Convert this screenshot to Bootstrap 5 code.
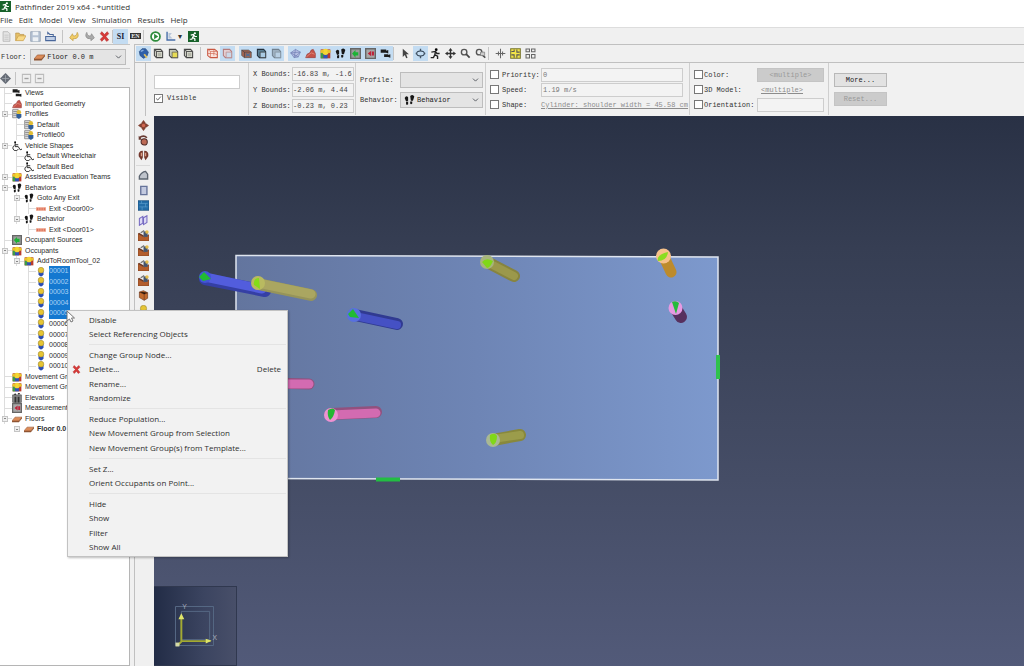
<!DOCTYPE html>
<html lang="en">
<head>
<meta charset="utf-8">
<meta name="viewport" content="width=device-width, initial-scale=1">
<title>Pathfinder 2019 x64 - *untitled</title>
<link href="https://cdn.jsdelivr.net/npm/bootstrap@5.3.0/dist/css/bootstrap.min.css" rel="stylesheet">
<style>
  body { font: 8px/12px "Open Sans", "Noto Sans", sans-serif; color: #333; background: #f0f0f0; }
  .mono { font-family: "Liberation Mono", monospace; font-size: 7px; line-height: 10px; color: #333; }
  .titlebar { height: 13px; background: #fff; }
  .menubar { height: 14px; background: #fff; gap: 6px; }
  .menubar a { color: #333; }
  .toolstrip { height: 17px; border-top: 1px solid #ddd; }
  .tool { width: 15px; height: 15px; flex: none; padding: 0; border: 0; border-radius: 0; line-height: 1; display: flex; align-items: center; justify-content: center; background: transparent; }
  .tool.first { width: 13px; }
  .tool.on { background: #c3dcf2; }
  .tool svg, .ico { width: 11px; height: 11px; flex: none; }
  .tool b { font: bold 8px "Liberation Serif", serif; color: #223; }
  .tool b.lang { font-size: 6px; background: #333; color: #eee; padding: 0 1px; }
  .rule-v { width: 1px; height: 13px; background: #c4c4c4; flex: none; }
  .side { width: 130px; flex: none; border-top: 1px solid #c4c4c4; }
  .floorbar { height: 24px; border-bottom: 1px solid #c8c8c8; padding: 0 4px 0 1px; }
  .treebar { height: 18px; padding-left: 0; }
  .treebar .ico { color: #555; }
  .tree { background: #fff; border: 1px solid #b5b5b5; border-left: 0; font: 7px/10px "Liberation Sans", sans-serif; color: #2c2c2c; white-space: nowrap; overflow: hidden; }
  .tree li { display: flex; align-items: center; height: 10px; }
  .tree li:nth-child(even) { height: 11px; }
  .tree .ico { width: 10px; height: 10px; margin-right: 3px; }
  .tree .on { background: #1478d0; color: #a9d2f5; align-self: stretch; padding-right: 2px; }
  .knot { width: 12px; align-self: stretch; flex: none; display: flex; align-items: center; padding-left: 2px;
    background: linear-gradient(#ddd, #ddd) 4px 0 / 1px 100% no-repeat, linear-gradient(#ddd, #ddd) 4px 5px / 8px 1px no-repeat; }
  .knot.pass { background: linear-gradient(#ddd, #ddd) 4px 0 / 1px 100% no-repeat; }
  .knot.none { background: none; }
  .knot i { width: 6px; height: 6px; border: 1px solid #c5c5c5; background: linear-gradient(#888, #888) center / 2px 1px no-repeat #eee; }
  .work { border: 1px solid #c0c0c0; border-width: 1px 0 0 1px; margin-left: 4px; min-width: 0; }
  .viewtools { height: 18px; padding-left: 1px; border-bottom: 1px solid #c0c0c0; gap: 0; }
  .props { margin-left: 10px; height: 53px; border-left: 1px solid #c0c0c0; background: #f1f1f1; white-space: nowrap; overflow: hidden; }
  .cell { border-right: 1px solid #cfcfcf; height: 52px; flex: none; }
  .field { height: 14px; min-height: 0; padding: 0 1px; border: 1px solid #cdcdcd; border-radius: 0; font: inherit; color: #777; background: #f3f3f3; }
  .bounds .field { color: #444; }
  .pick { height: 16px; min-height: 0; padding: 0 10px 0 14px; border: 1px solid #bdbdbd; border-radius: 0; font: inherit; color: #222; background-color: #e4e4e4; background-size: 7px 6px; background-position: right 3px center; }
  .tick { width: 9px; height: 9px; margin: 0; flex: none; border: 1px solid #777; border-radius: 0 !important; background-color: #fff; }
  .tick:checked { background-color: #fff; border-color: #777; background-image: url("data:image/svg+xml,%3csvg xmlns='http://www.w3.org/2000/svg' viewBox='0 0 9 9'%3e%3cpath d='M1.5 4.5l2 2 4-4.5' fill='none' stroke='%23333'/%3e%3c/svg%3e"); }
  .titled { width: 103px; }
  .bounds { display: grid; grid-template-columns: 39px 62px; grid-auto-rows: 14px; row-gap: 2px; padding: 4px 2px 0 4px; width: 107px; align-items: center; }
  .picks { display: grid; grid-template-columns: 40px 83px; row-gap: 4px; padding: 9px 3px 0 4px; width: 130px; align-content: start; align-items: center; }
  .attrs { display: grid; grid-template-columns: 12px 39px 142px; grid-auto-rows: 15px; padding: 4px 3px 0 4px; width: 204px; align-items: center; }
  .looks { display: grid; grid-template-columns: 10px 53px 67px; grid-auto-rows: 15px; padding: 4px 3px 0 4px; width: 139px; align-items: center; }
  .push { height: 14px; padding: 0; border: 1px solid #b8b8b8; border-radius: 0; font: inherit; background: #e2e2e2; color: #222; }
  .push:disabled { background: #cbcbcb; border-color: #c4c4c4; color: #999; opacity: 1; }
  .acts { width: 62px; padding: 10px 4px 0 5px; gap: 5px; }
  .faint { color: #8c8c8c; }
  .rail { width: 19px; padding: 2px 0 0 1px; flex: none; }
  .rail hr { width: 14px; margin: 2px 0; border-color: #999; }
  .stage { background: linear-gradient(#293145, #363e53 24%, #454d66 66%, #525a79); min-width: 0; }
  .stage .scene { display: block; width: 100%; }
  .axes { position: absolute; left: 0; bottom: 0; width: 83px; height: 80px; background: linear-gradient(90deg, #222c46, #3b4460 60%, #484f69); border: 1px solid #30384f; border-left: 0; }
  .popmenu { position: absolute; left: 67px; top: 310px; width: 221px; background: #f2f2f2; border: 1px solid #c2c2c2; border-radius: 0; padding: 1px 0 2px; box-shadow: 1px 1px 2px #0004; font-size: 8px; }
  .popmenu button { display: flex; align-items: center; width: 100%; height: 15px; padding: 0 6px 0 4px; border: 0; background: none; color: #303030; text-align: left; line-height: 12px; }
  .popmenu div button:nth-child(even) { height: 14px; }
  .popmenu svg { width: 9px; height: 9px; }
  .popmenu .lead-in { width: 17px; flex: none; display: flex; }
  .popmenu hr { margin: 3px 1px 2px 21px; border-color: #bbb; }
  .pointer { position: absolute; left: 66px; top: 310px; width: 9px; height: 13px; }
</style>
</head>
<body class="vh-100 d-flex flex-column overflow-hidden position-relative">
<svg class="d-none">
  <defs>
  <symbol id="run" viewBox="0 0 16 16"><path d="M0 0h16v16H0z" fill="#17622a"/><circle cx="10" cy="3.3" r="1.6" fill="#fff"/><path d="M4 6l4-1 2 3h3M8.500 5.500l-1.500 4 3 2v3M7 9l-1.500 3H2.500" fill="none" stroke="#fff" stroke-width="1.8"/></symbol>
  <symbol id="page" viewBox="0 0 16 16"><path d="M3 1h7l3 3v11H3z" fill="#e4e4e4" stroke="#aaa"/><path d="M5 6h6M5 9h6M5 12h6" stroke="#bbb"/></symbol>
  <symbol id="open" viewBox="0 0 16 16"><path d="M1 14V3h5l1 2h6v3" fill="#e5c069" stroke="#b8924a"/><path d="M1 14l4-7h11l-4 7z" fill="#f8d987" stroke="#c79c48"/></symbol>
  <symbol id="disk" viewBox="0 0 16 16"><path d="M1 1h14v14H1z" fill="#b6c3d4" stroke="#8796aa"/><path d="M4 1h8v5H4zM4 9h8v6H4z" fill="#edf1f5"/></symbol>
  <symbol id="import" viewBox="0 0 16 16"><path d="M1 8h14v6H1z" fill="#c1cfe5" stroke="#49679b" stroke-width="1.500"/><path d="M4 5V2l3 3h5v3" fill="none" stroke="#49679b" stroke-width="1.500"/></symbol>
  <symbol id="undo" viewBox="0 0 16 16"><path d="M1 10l4-6 1 3c4 1 5-1 6-5 3 5 1 10-6 9v3z" fill="#f2cd68" stroke="#bf9a3e"/></symbol>
  <symbol id="redo" viewBox="0 0 16 16"><path d="M15 10l-4-6-1 3C6 8 5 6 4 2c-3 5-1 10 6 9v3z" fill="#aaa" stroke="#888"/></symbol>
  <symbol id="cross" viewBox="0 0 16 16"><path d="M2 4l2-3 4 4 4-4 2 3-4 4 4 5-3 2-3-4-4 4-2-3 4-4z" fill="#d73a38" stroke="#b93434"/></symbol>
  <symbol id="play" viewBox="0 0 16 16"><circle cx="8" cy="8" r="6.500" fill="#fff" stroke="#2c8b3b" stroke-width="2.500"/><path d="M6 4l6 4-6 4z" fill="#2c8b3b"/></symbol>
  <symbol id="chart" viewBox="0 0 16 16"><path d="M3 1v12h12" fill="none" stroke="#456ca8" stroke-width="2"/><path d="M5 11V3h5l-3 4 4 4z" fill="#b9c6da"/></symbol>
  <symbol id="gem" viewBox="0 0 16 16"><path d="M2 5l4-4h5l4 5-2 6-5 3-5-4z" fill="#2e60a9" stroke="#24477b"/><path d="M9 9l4 5" stroke="#e2c35e" stroke-width="2.500"/><path d="M4 5l4-2" stroke="#86aede" stroke-width="2"/></symbol>
  <symbol id="cube" viewBox="0 0 16 16"><path d="M2 2h9l3 3v9H5l-3-3z" fill="#d8dacf" stroke="#444" stroke-width="1.500"/><path d="M5 5h9M5 5v9M2 2l3 3" stroke="#555" stroke-width="1.500" fill="none"/><path d="M7 7h5v5H7z" fill="#b4b6a9"/></symbol>
  <symbol id="cubey" viewBox="0 0 16 16"><path d="M2 2h9l3 3v9H5l-3-3z" fill="#c6c9b5" stroke="#444" stroke-width="1.500"/><path d="M6 6h8v8H6z" fill="#e7dc55" stroke="#555"/></symbol>
  <symbol id="cuber" viewBox="0 0 16 16"><path d="M1 2h10l4 3v9H5l-4-3z" fill="#fae3dc" stroke="#c85640" stroke-width="1.500"/><path d="M1 2l4 3h10M5 5v9M1 8h10l4 2M10 2v9" stroke="#d16a55" fill="none"/></symbol>
  <symbol id="cubep" viewBox="0 0 16 16"><path d="M2 2h9l3 3v9H5l-3-3z" fill="#e4cfd2" stroke="#b57b7c" stroke-width="1.500"/><path d="M6 6h8v8H6z" fill="#ccd8e8" stroke="#b88"/></symbol>
  <symbol id="cubeb" viewBox="0 0 16 16"><path d="M2 2h9l3 3v9H5l-3-3z" fill="#5b8096" stroke="#23303d" stroke-width="1.500"/><path d="M6 6h8v8H6z" fill="#a9cbe4" stroke="#333"/></symbol>
  <symbol id="cubes" viewBox="0 0 16 16"><path d="M2 2h9l3 3v9H5l-3-3z" fill="#9db0c0" stroke="#71808e" stroke-width="1.500"/><path d="M6 6h8v8H6z" fill="#b9d0e4" stroke="#81909e"/></symbol>
  <symbol id="cubex" viewBox="0 0 16 16"><path d="M1 3h10l4 3v8H5l-4-3z" fill="#a56450" stroke="#555"/><path d="M1 3l4 3h10M5 6v8" stroke="#3f3f48" fill="none"/><path d="M7 8l6 4M7 12l6-4" stroke="#4a6d96" stroke-width="1.500"/></symbol>
  <symbol id="mesh" viewBox="0 0 16 16"><path d="M1 7l7-5 7 4-3 7-6 1z" fill="#b6c0e3" stroke="#7180b5"/><path d="M1 7l11 6M8 2l-2 12M15 6L6 14M1 7l14-1" stroke="#7180b5"/></symbol>
  <symbol id="hill" viewBox="0 0 16 16"><path d="M1 14l2-5 4-2 2-4 3-1 3 6v6z" fill="#c65349" stroke="#983f3b"/><path d="M2 13l7-6 5 2" stroke="#e59b8b" fill="none"/></symbol>
  <symbol id="group" viewBox="0 0 16 16"><path d="M1 2h14v13H1z" fill="#b83c2c"/><path d="M1 7h4v8H1z" fill="#3a9c48"/><path d="M5 9h6v6H5z" fill="#2c55b8"/><circle cx="8" cy="5.500" r="4.500" fill="#f4d634"/><circle cx="3" cy="5" r="2.500" fill="#e9c32c"/><circle cx="13" cy="5" r="2.500" fill="#e9c32c"/></symbol>
  <symbol id="feet" viewBox="0 0 16 16"><path d="M1 5q2-4 5-1l0 5-3 1zM3 11l3-1v4q-2 2-3 0zM9 2q4-3 6 1l-2 6h-3zM9 10h3v3q-2 2-3 0z" fill="#151515"/></symbol>
  <symbol id="src" viewBox="0 0 16 16"><path d="M1 1h14v14H1z" fill="#9a9d9a" stroke="#666" stroke-width="2"/><path d="M3 8l5-5v3h4v5H8v3z" fill="#1cb335"/></symbol>
  <symbol id="meas" viewBox="0 0 16 16"><path d="M1 1h14v14H1z" fill="#a8a8a8" stroke="#666" stroke-width="2"/><path d="M4 8l5-4v8zM10 5h3v6h-3z" fill="#bd2139"/></symbol>
  <symbol id="cams" viewBox="0 0 16 16"><path d="M1 2h8v2l3-1v5L9 7H1zM6 9h6v1l3-1v5l-3-1H6z" fill="#1c1c1c"/></symbol>
  <symbol id="arrow" viewBox="0 0 16 16"><path d="M4 1v12l3-3 2 5 2-1-2-5h4z" fill="#444"/></symbol>
  <symbol id="orbit" viewBox="0 0 16 16"><path d="M8 1v14M1 8h14" stroke="#456" stroke-width="2"/><ellipse cx="8" cy="8" rx="5.500" ry="3.500" fill="#c3dcf2" stroke="#345" stroke-width="1.500"/></symbol>
  <symbol id="walk" viewBox="0 0 16 16"><circle cx="9" cy="2.500" r="2"/><path d="M2 6l6-1 2 3h4M8 5l-1 5 4 2v4M7 10l-2 4H1" fill="none" stroke="#222" stroke-width="2"/></symbol>
  <symbol id="move" viewBox="0 0 16 16"><path d="M8 0l3 4H9v3h3V5l4 3-4 3V9H9v3h2l-3 4-3-4h2V9H4v2L0 8l4-3v2h3V4H5z" fill="#333"/></symbol>
  <symbol id="globe" viewBox="0 0 16 16"><path d="M8 0l3 3 2 2 3 3-3 3-2 2-3 3-3-3-2-2-3-3 3-3 2-2z" fill="#666c76"/><path d="M8 3v10M3 8h10" stroke="#a8adb5"/></symbol>
  <symbol id="lens" viewBox="0 0 16 16"><circle cx="6" cy="6" r="4" fill="#eee" stroke="#555" stroke-width="2"/><path d="M9 9l5 5" stroke="#444" stroke-width="2.500"/></symbol>
  <symbol id="lens2" viewBox="0 0 16 16"><circle cx="6" cy="6" r="4" fill="#eee" stroke="#555" stroke-width="2"/><path d="M9 9l6 5" stroke="#444" stroke-width="2"/><path d="M8 6h6v5H8z" stroke="#777" fill="#ccc"/></symbol>
  <symbol id="axis" viewBox="0 0 16 16"><path d="M8 1v14M1 8h14M5 5v6M11 5v6" stroke="#666" stroke-width="1.500"/></symbol>
  <symbol id="fity" viewBox="0 0 16 16"><path d="M1 1h14v14H1z" fill="#f2e448" stroke="#77752f" stroke-width="1.500"/><path d="M2 5h4V2M10 2v4h4M14 10h-4v4M6 14v-4H2" fill="none" stroke="#555" stroke-width="1.500"/></symbol>
  <symbol id="fit" viewBox="0 0 16 16"><path d="M1.500 1.500h5v4h-5zM9.500 1.500h5v4h-5zM1.500 9.500h5v5h-5zM9.500 9.500h5v5h-5z" fill="none" stroke="#666" stroke-width="1.500"/></symbol>
  <symbol id="slab" viewBox="0 0 16 16"><path d="M0 11l5-6h11l-5 6z" fill="#dc8c58" stroke="#9a5c38"/><path d="M0 11h11l5-6v2l-5 6H0z" fill="#8e5432"/></symbol>
  <symbol id="prof" viewBox="0 0 16 16"><path d="M1 1h9v13H1z" fill="#ddd" stroke="#666"/><path d="M2 4h6M2 7h6M2 10h6" stroke="#666"/><circle cx="11" cy="5" r="3.500" fill="#dfbd35"/><path d="M7 8h8v5l-4 3-4-3z" fill="#315e98"/></symbol>
  <symbol id="chair" viewBox="0 0 16 16"><circle cx="5" cy="2" r="1.500"/><path d="M5 3v6h5l3 5 3-1M5 6h5" fill="none" stroke="#222" stroke-width="1.500"/><path d="M4 7a4.500 4.500 0 1 0 6 6" fill="none" stroke="#222" stroke-width="1.500"/></symbol>
  <symbol id="door" viewBox="0 0 16 16"><path d="M0 5h16v6H0z" fill="#f4b9a5"/><path d="M2 6v4M5 6v4M8 6v4M11 6v4M14 6v4" stroke="#d4573e" stroke-width="1.500"/></symbol>
  <symbol id="man" viewBox="0 0 16 16"><path d="M4 6h8v6q-4 6-8 0z" fill="#2a4db3"/><circle cx="8" cy="5" r="4.500" fill="#e6c534" stroke="#a5903a"/></symbol>
  <symbol id="lift" viewBox="0 0 16 16"><path d="M1 3h14v12H1z" fill="#8a8a8a" stroke="#444"/><path d="M5 0l2 3H3zM11 3l2-3H9zM4 6h3v9H4zM9 6h3v9H9z" fill="#333"/></symbol>
  <symbol id="mover" viewBox="0 0 16 16"><path d="M8 0l3 4v1h1l4 3-4 3h-1v1l-3 4-3-4v-1H4L0 8l4-3h1V4z" fill="#854334"/><circle cx="8" cy="8" r="2.500" fill="#d16650"/></symbol>
  <symbol id="spin" viewBox="0 0 16 16"><path d="M2 4q6-5 11 0" fill="none" stroke="#683a32" stroke-width="2.500"/><path d="M1 1v6h5z" fill="#683a32"/><circle cx="9" cy="10" r="4.500" fill="#bc6a55" stroke="#4c2a27" stroke-width="1.500"/></symbol>
  <symbol id="flip" viewBox="0 0 16 16"><path d="M7 1q-7 0-6 8l4 6 2-4zM9 1q7 0 6 8l-4 6-2-4z" fill="#74382d"/><path d="M5 4v5M11 4v5" stroke="#dc9d85" stroke-width="2"/></symbol>
  <symbol id="poly" viewBox="0 0 16 16"><path d="M2 13V9q3-6 9-7l3 4v7z" fill="#bfc4cc" stroke="#5c6570" stroke-width="2"/></symbol>
  <symbol id="rect" viewBox="0 0 16 16"><path d="M4 2h9v12H4z" fill="#c3cae0" stroke="#66739a" stroke-width="2"/></symbol>
  <symbol id="wall" viewBox="0 0 16 16"><path d="M0 1h16v14H0z" fill="#236da8" stroke="#1b4c79"/><path d="M2 5h12M2 10h12M5 1v4M11 5v5M6 10v5" stroke="#5b9ccc"/></symbol>
  <symbol id="gate" viewBox="0 0 16 16"><path d="M2 5l5-3v10l-5 3zM8 4l5-3v10l-5 3z" fill="#dcdaf5" stroke="#766bc2" stroke-width="1.500"/></symbol>
  <symbol id="stair" viewBox="0 0 16 16"><path d="M0 5l5 3 4 2 7-3v9H0z" fill="#b35d2c" stroke="#7a4024"/><path d="M8 2h6v8H8z" fill="#43556f"/><path d="M1 5l7 4" stroke="#6d3821" stroke-width="2"/><path d="M4 4l5-3" stroke="#777" stroke-width="2"/><circle cx="13" cy="3" r="2.500" fill="#e5bd4a"/></symbol>
  <symbol id="box" viewBox="0 0 16 16"><path d="M2 3l6-2 6 3v8l-5 3-7-4z" fill="#c26b2d" stroke="#713b20"/><path d="M2 3l7 3 5-2M9 6v9" stroke="#713b20"/></symbol>
  <symbol id="mini" viewBox="0 0 16 16"><path d="M2 2h12v12H2z" fill="#eee" stroke="#aaa" stroke-width="1.500"/><path d="M5 8h6" stroke="#888" stroke-width="2"/></symbol>
  </defs>
</svg>

<header>
  <div class="titlebar d-flex align-items-center"><svg class="ico me-0"><use href="#run"/></svg><span class="ps-1">Pathfinder 2019 x64 - *untitled</span></div>
  <nav class="menubar d-flex align-items-center">
    <a class="text-decoration-none" href="#">File</a><a class="text-decoration-none" href="#">Edit</a><a class="text-decoration-none" href="#">Model</a><a class="text-decoration-none" href="#">View</a><a class="text-decoration-none" href="#">Simulation</a><a class="text-decoration-none" href="#">Results</a><a class="text-decoration-none" href="#">Help</a>
  </nav>
  <div class="toolstrip d-flex align-items-center">
    <button class="tool first" aria-label="New"><svg><use href="#page"/></svg></button>
    <button class="tool" aria-label="Open"><svg><use href="#open"/></svg></button>
    <button class="tool" aria-label="Save"><svg><use href="#disk"/></svg></button>
    <button class="tool" aria-label="Import"><svg><use href="#import"/></svg></button>
    <span class="rule-v mx-1"></span>
    <button class="tool" aria-label="Undo"><svg><use href="#undo"/></svg></button>
    <button class="tool" aria-label="Redo"><svg><use href="#redo"/></svg></button>
    <button class="tool" aria-label="Delete"><svg><use href="#cross"/></svg></button>
    <span class="rule-v"></span>
    <button class="tool on"><b>SI</b></button>
    <button class="tool"><b class="lang">EN</b></button>
    <span class="rule-v me-1"></span>
    <button class="tool" aria-label="Run"><svg><use href="#play"/></svg></button>
    <button class="tool" aria-label="Results"><svg><use href="#chart"/></svg></button>
    <span class="me-1">▾</span>
    <button class="tool" aria-label="Show results"><svg><use href="#run"/></svg></button>
  </div>
</header>

<main class="d-flex flex-grow-1 overflow-hidden">
  <aside class="side d-flex flex-column">
    <div class="floorbar mono d-flex align-items-center">
      <label for="floor" class="me-1">Floor:</label>
      <div class="position-relative flex-grow-1">
        <svg class="ico position-absolute top-50 translate-middle-y ms-1"><use href="#slab"/></svg>
        <select id="floor" class="form-select pick ps-3"><option>Floor 0.0 m</option></select>
      </div>
    </div>
    <div class="treebar d-flex align-items-center">
      <svg class="ico"><use href="#globe"/></svg><span class="rule-v mx-1"></span>
      <button class="tool first" aria-label="Expand all"><svg class="opacity-75"><use href="#mini"/></svg></button>
      <button class="tool first" aria-label="Collapse all"><svg class="opacity-75"><use href="#mini"/></svg></button>
    </div>
    <ul class="tree list-unstyled mb-0 flex-grow-1">
      <li><span class="knot"></span><svg class="ico"><use href="#cams"/></svg>Views</li>
      <li><span class="knot"></span><svg class="ico"><use href="#hill"/></svg>Imported Geometry</li>
      <li><span class="knot"><i></i></span><svg class="ico"><use href="#prof"/></svg>Profiles</li>
      <li><span class="knot pass"></span><span class="knot"></span><svg class="ico"><use href="#prof"/></svg>Default</li>
      <li><span class="knot pass"></span><span class="knot"></span><svg class="ico"><use href="#prof"/></svg>Profile00</li>
      <li><span class="knot"><i></i></span><svg class="ico"><use href="#chair"/></svg>Vehicle Shapes</li>
      <li><span class="knot pass"></span><span class="knot"></span><svg class="ico"><use href="#chair"/></svg>Default Wheelchair</li>
      <li><span class="knot pass"></span><span class="knot"></span><svg class="ico"><use href="#chair"/></svg>Default Bed</li>
      <li><span class="knot"><i></i></span><svg class="ico"><use href="#group"/></svg>Assisted Evacuation Teams</li>
      <li><span class="knot"><i></i></span><svg class="ico"><use href="#feet"/></svg>Behaviors</li>
      <li><span class="knot pass"></span><span class="knot"><i></i></span><svg class="ico"><use href="#feet"/></svg>Goto Any Exit</li>
      <li><span class="knot pass"></span><span class="knot pass"></span><span class="knot"></span><svg class="ico"><use href="#door"/></svg>Exit &lt;Door00&gt;</li>
      <li><span class="knot pass"></span><span class="knot"><i></i></span><svg class="ico"><use href="#feet"/></svg>Behavior</li>
      <li><span class="knot pass"></span><span class="knot none"></span><span class="knot"></span><svg class="ico"><use href="#door"/></svg>Exit &lt;Door01&gt;</li>
      <li><span class="knot"></span><svg class="ico"><use href="#src"/></svg>Occupant Sources</li>
      <li><span class="knot"><i></i></span><svg class="ico"><use href="#group"/></svg>Occupants</li>
      <li><span class="knot pass"></span><span class="knot"><i></i></span><svg class="ico"><use href="#group"/></svg>AddToRoomTool_02</li>
      <li><span class="knot pass"></span><span class="knot none"></span><span class="knot"></span><svg class="ico"><use href="#man"/></svg><span class="on">00001</span></li>
      <li><span class="knot pass"></span><span class="knot none"></span><span class="knot"></span><svg class="ico"><use href="#man"/></svg><span class="on">00002</span></li>
      <li><span class="knot pass"></span><span class="knot none"></span><span class="knot"></span><svg class="ico"><use href="#man"/></svg><span class="on">00003</span></li>
      <li><span class="knot pass"></span><span class="knot none"></span><span class="knot"></span><svg class="ico"><use href="#man"/></svg><span class="on">00004</span></li>
      <li><span class="knot pass"></span><span class="knot none"></span><span class="knot"></span><svg class="ico"><use href="#man"/></svg><span class="on">00005</span></li>
      <li><span class="knot pass"></span><span class="knot none"></span><span class="knot"></span><svg class="ico"><use href="#man"/></svg>00006</li>
      <li><span class="knot pass"></span><span class="knot none"></span><span class="knot"></span><svg class="ico"><use href="#man"/></svg>00007</li>
      <li><span class="knot pass"></span><span class="knot none"></span><span class="knot"></span><svg class="ico"><use href="#man"/></svg>00008</li>
      <li><span class="knot pass"></span><span class="knot none"></span><span class="knot"></span><svg class="ico"><use href="#man"/></svg>00009</li>
      <li><span class="knot pass"></span><span class="knot none"></span><span class="knot"></span><svg class="ico"><use href="#man"/></svg>00010</li>
      <li><span class="knot"></span><svg class="ico"><use href="#group"/></svg>Movement Groups</li>
      <li><span class="knot"></span><svg class="ico"><use href="#group"/></svg>Movement Groups</li>
      <li><span class="knot"></span><svg class="ico"><use href="#lift"/></svg>Elevators</li>
      <li><span class="knot"></span><svg class="ico"><use href="#meas"/></svg>Measurement</li>
      <li><span class="knot"><i></i></span><svg class="ico"><use href="#slab"/></svg>Floors</li>
      <li class="fw-bold"><span class="knot none"></span><span class="knot none"><i></i></span><svg class="ico"><use href="#slab"/></svg>Floor 0.0 m</li>
    </ul>
  </aside>

  <section class="work flex-grow-1 d-flex flex-column">
    <div class="viewtools d-flex align-items-center">
      <button class="tool on" aria-label="Perspective"><svg><use href="#gem"/></svg></button>
      <button class="tool" aria-label="Top"><svg><use href="#cube"/></svg></button>
      <button class="tool" aria-label="Front"><svg><use href="#cubey"/></svg></button>
      <button class="tool" aria-label="Side"><svg><use href="#cube"/></svg></button>
      <span class="rule-v mx-1"></span>
      <button class="tool" aria-label="Wireframe"><svg><use href="#cuber"/></svg></button>
      <button class="tool on me-1" aria-label="Solid"><svg><use href="#cubep"/></svg></button>
      <button class="tool on" aria-label="Materials"><svg><use href="#cubex"/></svg></button>
      <button class="tool on" aria-label="Outlines"><svg><use href="#cubeb"/></svg></button>
      <button class="tool on me-1" aria-label="Smooth"><svg><use href="#cubes"/></svg></button>
      <button class="tool on" aria-label="Mesh"><svg><use href="#mesh"/></svg></button>
      <button class="tool on" aria-label="Geometry"><svg><use href="#hill"/></svg></button>
      <button class="tool on" aria-label="Occupants"><svg><use href="#group"/></svg></button>
      <button class="tool on" aria-label="Behaviors"><svg><use href="#feet"/></svg></button>
      <button class="tool on" aria-label="Sources"><svg><use href="#src"/></svg></button>
      <button class="tool on" aria-label="Regions"><svg><use href="#meas"/></svg></button>
      <button class="tool on" aria-label="Views"><svg><use href="#cams"/></svg></button>
      <span class="rule-v me-1"></span>
      <button class="tool" aria-label="Select"><svg><use href="#arrow"/></svg></button>
      <button class="tool on" aria-label="Orbit"><svg><use href="#orbit"/></svg></button>
      <button class="tool" aria-label="Walk"><svg><use href="#walk"/></svg></button>
      <button class="tool" aria-label="Pan"><svg><use href="#move"/></svg></button>
      <button class="tool" aria-label="Zoom"><svg><use href="#lens"/></svg></button>
      <button class="tool" aria-label="Zoom box"><svg><use href="#lens2"/></svg></button>
      <span class="rule-v me-1"></span>
      <button class="tool" aria-label="Reset"><svg><use href="#axis"/></svg></button>
      <button class="tool" aria-label="Fit selection"><svg><use href="#fity"/></svg></button>
      <button class="tool" aria-label="Fit all"><svg><use href="#fit"/></svg></button>
    </div>

    <form class="props mono d-flex">
      <div class="cell titled d-flex flex-column pt-1">
        <input class="form-control field bg-white mx-2 mt-2 w-auto" aria-label="Name">
        <label class="d-flex align-items-center mx-2 mt-1"><input type="checkbox" class="form-check-input tick me-1" checked>Visible</label>
      </div>
      <div class="cell bounds">
        <label for="bx">X Bounds:</label><input id="bx" class="form-control field px-0" value="-16.83 m, -1.6" readonly>
        <label for="by">Y Bounds:</label><input id="by" class="form-control field px-0" value="-2.06 m, 4.44" readonly>
        <label for="bz">Z Bounds:</label><input id="bz" class="form-control field px-0" value="-0.23 m, 0.23" readonly>
      </div>
      <div class="cell picks">
        <label for="profile">Profile:</label><select id="profile" class="form-select pick"><option></option></select>
        <label for="behavior">Behavior:</label>
        <div class="position-relative"><svg class="ico position-absolute top-50 translate-middle-y ms-1"><use href="#feet"/></svg>
          <select id="behavior" class="form-select pick ps-3"><option>Behavior</option></select></div>
      </div>
      <div class="cell attrs">
        <input id="c1" type="checkbox" class="form-check-input tick"><label for="c1">Priority:</label><input class="form-control field" value="0" aria-label="Priority value">
        <input id="c2" type="checkbox" class="form-check-input tick"><label for="c2">Speed:</label><input class="form-control field" value="1.19 m/s" aria-label="Speed value">
        <input id="c3" type="checkbox" class="form-check-input tick"><label for="c3">Shape:</label><a href="#" class="faint">Cylinder: shoulder width = 45.58 cm</a>
      </div>
      <div class="cell looks">
        <input id="c4" type="checkbox" class="form-check-input tick"><label for="c4">Color:</label><button type="button" class="btn push" disabled>&lt;multiple&gt;</button>
        <input id="c5" type="checkbox" class="form-check-input tick"><label for="c5">3D Model:</label><a href="#" class="faint ps-1">&lt;multiple&gt;</a>
        <input id="c6" type="checkbox" class="form-check-input tick"><label for="c6">Orientation:</label><input class="form-control field" aria-label="Orientation value">
      </div>
      <div class="acts d-flex flex-column">
        <button type="button" class="btn push">More...</button>
        <button type="button" class="btn push" disabled>Reset...</button>
      </div>
    </form>

    <div class="d-flex flex-grow-1 overflow-hidden">
      <div class="rail">
        <button class="tool" aria-label="Move"><svg><use href="#mover"/></svg></button>
        <button class="tool" aria-label="Rotate"><svg><use href="#spin"/></svg></button>
        <button class="tool" aria-label="Mirror"><svg><use href="#flip"/></svg></button>
        <hr>
        <button class="tool" aria-label="Polygon room"><svg><use href="#poly"/></svg></button>
        <button class="tool" aria-label="Rectangular room"><svg><use href="#rect"/></svg></button>
        <button class="tool" aria-label="Wall"><svg><use href="#wall"/></svg></button>
        <button class="tool" aria-label="Door"><svg><use href="#gate"/></svg></button>
        <button class="tool" aria-label="Stairs"><svg><use href="#stair"/></svg></button>
        <button class="tool" aria-label="Ramp"><svg><use href="#stair"/></svg></button>
        <button class="tool" aria-label="Escalator"><svg><use href="#stair"/></svg></button>
        <button class="tool" aria-label="Walkway"><svg><use href="#stair"/></svg></button>
        <button class="tool" aria-label="Elevator"><svg><use href="#box"/></svg></button>
        <button class="tool" aria-label="Occupant"><svg><use href="#man"/></svg></button>
      </div>
      <div class="stage flex-grow-1 position-relative overflow-hidden">
        <svg class="scene" viewBox="154 116 870 550">
          <defs>
            <linearGradient id="room"><stop offset="0" stop-color="#63759e"/><stop offset=".5" stop-color="#6e85b5"/><stop offset="1" stop-color="#7d99cd"/></linearGradient>
          </defs>
          <path d="M236 255.500L718 257v223l-482-1.500z" fill="url(#room)" stroke="#dfe5ef" stroke-width="1.500"/>
          <path d="M718 355v24" stroke="#2fc24b" stroke-width="4"/><path d="M376 479.500h24" stroke="#23bd43" stroke-width="4"/>
          <g stroke-linecap="round" stroke-width="12" fill="none">
            <path d="M205 279L265 291" stroke="#353fa4"/><path d="M205 277L262 289" stroke="#525ddd" stroke-width="9"/>
            <path d="M258 284L311 295" stroke="#96945a"/><path d="M258 283L311 294" stroke="#aaa661" stroke-width="9"/>
            <path d="M355 315L397 324" stroke="#303a91"/><path d="M355 316L397 325" stroke="#4551c4" stroke-width="8"/>
            <path d="M270 383L309 384" stroke="#91517e" stroke-width="11"/><path d="M270 384L309 384" stroke="#d36bb1" stroke-width="9"/>
            <path d="M331 414L376 412" stroke="#91517e"/><path d="M331 415L376 413" stroke="#d36bb1" stroke-width="9"/>
            <path d="M487 262L514 276" stroke="#87843f"/><path d="M487 262L514 276" stroke="#9b984b" stroke-width="8"/>
            <path d="M493 440L520 435" stroke="#88883c"/><path d="M493 439L520 435" stroke="#9b9c4b" stroke-width="8"/>
            <path d="M664 257L671 272" stroke="#bd8b2c" stroke-width="11"/>
            <path d="M676 309L681 317" stroke="#57305e"/>
          </g>
          <g><circle cx="205" cy="277" r="6" fill="#4355d6"/><path d="M199 277l5-5 7 7-8 2z" fill="#21bb33"/>
            <circle cx="258" cy="283" r="7" fill="#b9ba60"/><path d="M259 278q-6 0-5 7l6 4z" fill="#83dd18"/>
            <circle cx="354" cy="315" r="7" fill="#5870df"/><path d="M348 314l5-5 6 9-9-1z" fill="#21bb33"/>
            <circle cx="331" cy="415" r="7" fill="#ee91d1"/><path d="M328 410q5-3 7 0-1 7-5 10-3-4-2-10z" fill="#24b632"/>
            <circle cx="487" cy="262" r="7" fill="#a7b57d"/><path d="M482 262q4-5 11-1-3 7-6 7z" fill="#80d818"/>
            <circle cx="493" cy="440" r="7" fill="#a9b894"/><path d="M490 435q5-3 7 1 0 7-4 9-4-3-3-10z" fill="#80d818"/>
            <circle cx="663.500" cy="256" r="7.500" fill="#f6c18a"/><path d="M658 261q-2-6 10-9-1 9-10 9z" fill="#8bdd20"/>
            <circle cx="675.500" cy="308" r="7" fill="#e69ae2"/><path d="M672 302q4-2 7 1l-3 11z" fill="#25bb3b"/></g>
        </svg>
        <svg class="axes" viewBox="154 586 82 80">
          <path d="M175 606h39v40h-39zM181 611h29v29h-29z" fill="none" stroke="#566985"/>
          <path d="M181 618v24l-3 3M180 641.500h31" stroke="#a3aa32" stroke-width="2" fill="none"/>
          <path d="M178 619l3-6 3 6zM206 639l6 2-6 3z" fill="#dfe56a"/><path d="M175 643h4v4h-4z" fill="#d6dba6"/>
          <text x="182" y="609" font-size="7" fill="#a8adba" font-family="Liberation Sans">Y</text><text x="213" y="640" font-size="7" fill="#a8adba" font-family="Liberation Sans">X</text>
        </svg>
      </div>
    </div>
  </section>
</main>

<div class="popmenu" role="menu">
  <div><button><span class="lead-in"></span>Disable</button><button><span class="lead-in"></span>Select Referencing Objects</button></div>
  <hr>
  <div><button><span class="lead-in"></span>Change Group Node...</button><button><span class="lead-in"><svg><use href="#cross"/></svg></span>Delete...<span class="ms-auto">Delete</span></button><button><span class="lead-in"></span>Rename...</button><button><span class="lead-in"></span>Randomize</button></div>
  <hr>
  <div><button><span class="lead-in"></span>Reduce Population...</button><button><span class="lead-in"></span>New Movement Group from Selection</button><button><span class="lead-in"></span>New Movement Group(s) from Template...</button></div>
  <hr>
  <div><button><span class="lead-in"></span>Set Z...</button><button><span class="lead-in"></span>Orient Occupants on Point...</button></div>
  <hr>
  <div><button><span class="lead-in"></span>Hide</button><button><span class="lead-in"></span>Show</button><button><span class="lead-in"></span>Filter</button><button><span class="lead-in"></span>Show All</button></div>
</div>
<svg class="pointer" viewBox="0 0 9 13"><path d="M1 1v10l2.500-2 1.500 3 2-1-1.500-3H8.500z" fill="#fff" stroke="#777"/></svg>
<script src="https://cdn.jsdelivr.net/npm/bootstrap@5.3.0/dist/js/bootstrap.bundle.min.js"></script>
</body>
</html>
